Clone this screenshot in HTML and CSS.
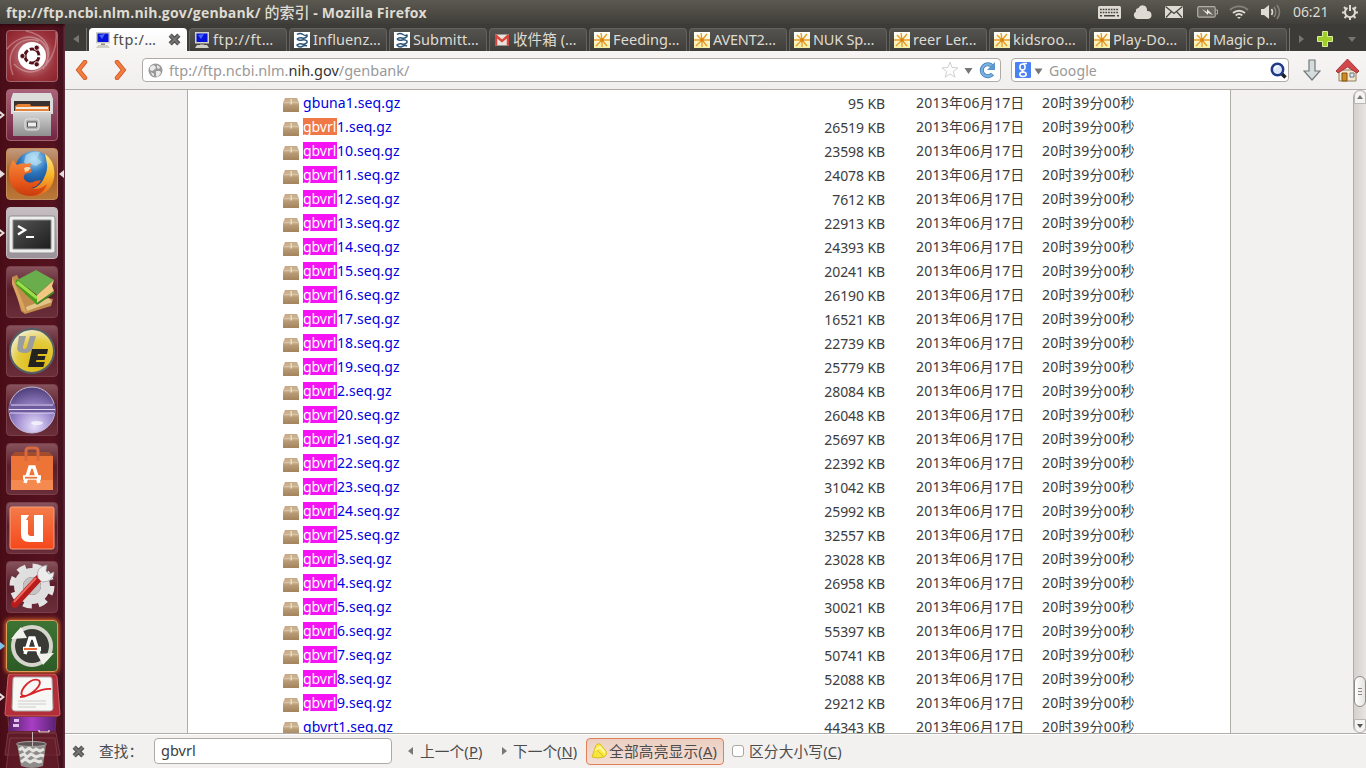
FILE: index.html
```
<!DOCTYPE html>
<html lang="zh-CN">
<head>
<meta charset="utf-8">
<title>ftp://ftp.ncbi.nlm.nih.gov/genbank/ 的索引</title>
<link rel="stylesheet" href="styles.css">
</head>
<body>
<svg class="defs" width="0" height="0" aria-hidden="true">
<defs>
<linearGradient id="boxg" x1="0" y1="0" x2="0" y2="1"><stop offset="0" stop-color="#c6a886"/><stop offset=".35" stop-color="#d0b896"/><stop offset=".5" stop-color="#b89d76"/><stop offset="1" stop-color="#a3835b"/></linearGradient>
<linearGradient id="starbg" x1="0" y1="0" x2="0" y2="1"><stop offset="0" stop-color="#fff"/><stop offset="1" stop-color="#f3eea0"/></linearGradient>
<linearGradient id="grey" x1="0" y1="0" x2="0" y2="1"><stop offset="0" stop-color="#d8d8d8"/><stop offset="1" stop-color="#8f8f8f"/></linearGradient>
<linearGradient id="orange" x1="0" y1="0" x2="0" y2="1"><stop offset="0" stop-color="#f47b4a"/><stop offset="1" stop-color="#f5481c"/></linearGradient>
<radialGradient id="globe" cx=".5" cy=".2" r=".8"><stop offset="0" stop-color="#b4e2f7"/><stop offset=".45" stop-color="#2c77bd"/><stop offset="1" stop-color="#123a7c"/></radialGradient>
<linearGradient id="fox" x1="0" y1="0" x2="0" y2="1"><stop offset="0" stop-color="#f5893a"/><stop offset=".6" stop-color="#e8581a"/><stop offset="1" stop-color="#c93c0c"/></linearGradient>
<linearGradient id="tail" x1="0" y1="0" x2="0" y2="1"><stop offset="0" stop-color="#ffe98a"/><stop offset=".5" stop-color="#f8b52b"/><stop offset="1" stop-color="#e8641b"/></linearGradient>
<linearGradient id="term" x1="0" y1="0" x2="1" y2="1"><stop offset="0" stop-color="#555"/><stop offset="1" stop-color="#1d1d1d"/></linearGradient>
<radialGradient id="ue" cx=".65" cy=".75" r=".8"><stop offset="0" stop-color="#dcb60a"/><stop offset=".6" stop-color="#e4cb3e"/><stop offset="1" stop-color="#f2f0dc"/></radialGradient>
<radialGradient id="ecl" cx=".55" cy=".85" r=".85"><stop offset="0" stop-color="#e6defb"/><stop offset=".5" stop-color="#9a86cb"/><stop offset="1" stop-color="#4d3d78"/></radialGradient>
<linearGradient id="purple" x1="0" y1="0" x2="1" y2="0"><stop offset="0" stop-color="#56206b"/><stop offset=".5" stop-color="#a83fc4"/><stop offset="1" stop-color="#5a2273"/></linearGradient>
<symbol id="box" viewBox="0 0 16 14"><path d="M2 0h12l1.500 3.500.5 1V14H0V4.500L.5 3.500z" fill="url(#boxg)"/><path d="M.5 4.500h15" stroke="#d9c5a7" stroke-width=".8"/><path d="M7.500 1v5.500h1.400V1z" fill="#ecdfc9"/></symbol>
<symbol id="monitor" viewBox="0 0 16 16"><path d="M1 0h14v11.500H1z" fill="#cfcfc6"/><path d="M2.500 1.500h11v8.500h-11z" fill="#0612d8"/><path d="M4 3l6-1-3 5z" fill="#4b66ff"/><path d="M6 11.500h4V13H6z" fill="#8b8b83"/><path d="M3 13h10l2 3H1z" fill="#cfcfc6"/></symbol>
<symbol id="ncbi" viewBox="0 0 16 16"><path d="M0 0h16v16H0z" fill="#fff"/><path d="M3 2.500q3-2 6 0t4 0v2q-2 2.500-5 1.500T3 7M3 7q2 2 5 1t5 1v1.500q-2 2.500-5 1.500t-5 1q2 3 5 1.500t5-.5" fill="none" stroke="#2b5579" stroke-width="1.500"/></symbol>
<symbol id="gmail" viewBox="0 0 14 11"><path d="M0 0h14v11H0z" fill="#e7e2da"/><path d="M0 11V0h1.500L7 5l5.500-5H14v11h-2.200V4L7 8 2.200 4v7z" fill="#d8433a"/></symbol>
<symbol id="spark" viewBox="0 0 16 16"><path d="M0 0h16v16H0z" fill="url(#starbg)"/><path d="M8 8L7 1M8 8l5-6M8 8h8M8 8l5 6M8 8v7M8 8l-6 6M8 8H0M8 8L3 3" stroke="#e79a28" stroke-width="1.350"/><circle cx="8" cy="8" r="1.700" fill="#d98212"/></symbol>
<symbol id="cross" viewBox="0 0 12 12"><path d="M2 2l8 8M10 2l-8 8" stroke="#555" stroke-width="4.200"/><path d="M2 2l8 8M10 2l-8 8" stroke="#777" stroke-width="1.500"/></symbol>
</defs>
</svg>
<div class="desktop">
<header class="panel">
  <div class="title">ftp://ftp.ncbi.nlm.nih.gov/genbank/ <span class="cjk">的索引</span> - Mozilla Firefox</div>
  <div class="indicators">
    <svg class="i-kbd" width="23" height="13" viewBox="0 0 23 13"><rect width="23" height="13" rx="1.500" fill="#dfdbd2"/><path d="M2 3.500h19M2 6.500h19" stroke="#45443f" stroke-width="1.600" stroke-dasharray="1.700 1"/><path d="M2 9.800h2M6 9.800h11M19 9.800h2" stroke="#45443f" stroke-width="1.600"/></svg>
    <svg class="i-cloud" width="19" height="14" viewBox="0 0 19 14"><path d="M4 14a4 4 0 0 1-1-7.500A3 3 0 0 1 5.500 3 4.500 4.500 0 0 1 14 4v2a4 4 0 0 1 1 8z" fill="#dfdbd2"/></svg>
    <svg class="i-mail" width="18" height="12" viewBox="0 0 18 12"><path d="M0 0h18v12H0z" fill="#dfdbd2"/><path d="M.5.5L9 7.500 17.500.5M1 11.500l5.500-6M17 11.500l-5.500-6" fill="none" stroke="#484740" stroke-width="1.300"/></svg>
    <svg class="i-bat" width="21" height="12" viewBox="0 0 21 12"><rect x=".7" y=".7" width="17.500" height="10.500" rx="1.500" fill="#67655f" stroke="#b2aea5" stroke-width="1.200"/><path d="M19 4h1.500v4H19" fill="none" stroke="#b2aea5"/><path d="M5 3l5 3V3l6 6-5-2v2z" fill="#efebe2"/></svg>
    <svg class="i-wifi" width="20" height="14" viewBox="0 0 20 14"><g fill="none" stroke-width="1.900"><path d="M1 5a13 13 0 0 1 18 0" stroke="#85827b"/><path d="M4 8a9 9 0 0 1 12 0" stroke="#dfdbd2"/><path d="M6.700 10.500a5 5 0 0 1 6.600 0" stroke="#dfdbd2"/></g><path d="M8 12h4l-2 2z" fill="#dfdbd2"/></svg>
    <svg class="i-vol" width="20" height="16" viewBox="0 0 20 16"><path d="M0 5h3l5-4v14l-5-4H0z" fill="#dfdbd2"/><path d="M10.500 5q2 3 0 6" fill="none" stroke="#dfdbd2" stroke-width="1.600"/><path d="M13 3q3.500 5 0 10M16 1q5 7 0 14" fill="none" stroke="#858179" stroke-width="1.600"/></svg>
    <span class="clock">06:21</span>
    <svg class="i-gear" width="16" height="16" viewBox="0 0 16 16"><path d="M5.500 3.800a5 5 0 1 0 5 0" fill="none" stroke="#dfdbd2" stroke-width="2"/><path d="M8 1v6M0 8.500h3M13 8.500h3M8 13v3M2 3l2 2M14 3l-2 2M2.500 14l2-2M13.500 14l-2-2" stroke="#dfdbd2" stroke-width="2"/></svg>
  </div>
</header>
<nav class="launcher">
  <div class="tile t-dash"><svg viewBox="0 0 52 52"><g fill="none" stroke="#fff" stroke-width="1.500" opacity=".3"><path d="M1 19C20-4 50 9 40 36M50 2C53 31 28 55 8 34M7 45C-2 21 13 5 33 11M20 1c21 4 29 19 17 38"/></g><circle cx="26" cy="26" r="14" fill="#fff"/><circle cx="26" cy="26" r="7" fill="none" stroke="#561018" stroke-width="3" stroke-dasharray="12.500 2.160" transform="rotate(10 26 26)"/><g fill="#561018" stroke="#fff" stroke-width=".8"><circle cx="16.500" cy="26" r="2.600"/><circle cx="30.700" cy="17.700" r="2.600"/><circle cx="30.700" cy="34.300" r="2.600"/></g></svg></div>
  <div class="tile t-files"><span class="pip left open"></span><svg viewBox="0 0 52 52"><path d="M7 4h38l2 6v15H5V10z" fill="#dcdcda"/><path d="M8 12h36v11H8z" fill="#39322e"/><path d="M9 17l3-2h12l1 2h18v6H9z" fill="#e58134"/><path d="M10 18h32v2H10z" fill="#f3ece3"/><path d="M7 22h38v25H7z" fill="url(#grey)"/><path d="M7 22.500h38" stroke="#f0f0f0"/><rect x="19" y="30" width="14" height="11" rx="2.500" fill="#b4b4b4" stroke="#e8e8e8"/><path d="M21.500 33h9v5h-9z" fill="#eee" stroke="#555"/></svg></div>
  <div class="tile t-fox"><span class="pip left"></span><span class="pip right"></span><svg viewBox="0 0 52 52"><circle cx="28" cy="22" r="19" fill="url(#globe)"/><path d="M20 7q7-5 14-3l-3 6 5 4-6 4-5-2-4 3-3-5z" fill="#b9e2f5" opacity=".65"/><path d="M39 6q9 6 9.500 19Q48 46 27 48q-10 0-15-6 20 2 26-12 4-8 3-14-1-6-2-10z" fill="url(#tail)"/><path d="M7 12l4 5q5-3 9-1l5-1-1 5 2 4-7 2q-3 4 1 7 4 3 9 0l6-1q-3 7-10 8 8 3 16-4-4 12-17 12Q5 47 3 27q0-9 4-15z" fill="url(#fox)"/><path d="M18 20q4-2 7 0-2 3-6 4z" fill="#fbd8a8"/></svg></div>
  <div class="tile t-term"><span class="pip left open"></span><svg viewBox="0 0 52 52"><rect x="3" y="9" width="46" height="37" rx="2" fill="#eceeec" stroke="#8e8e8e"/><path d="M7 13h38v29H7z" fill="url(#term)" stroke="#888"/><path d="M12 19l7 4-7 4.500" fill="none" stroke="#fff" stroke-width="2.300"/><path d="M20 30h8" stroke="#fff" stroke-width="2"/></svg></div>
  <div class="tile t-dark"><svg viewBox="0 0 52 52"><path d="M6 11l5-2 9 20 27 4-2 7-26 8-4-3z" fill="#c28d4c"/><path d="M20 41l23-9 3 4-25 9z" fill="#e5c48a"/><path d="M6 11v7l10 26 4 3-2-8z" fill="#d8a45f"/><path d="M30 4l18 10-17 15-20-15z" fill="#69ad4c"/><path d="M11 13q-3 4 0 7l20 19v-9z" fill="#4c9d1d"/><path d="M11 16l20 16" stroke="#9be04a" stroke-width="3"/><path d="M31 29l17-15-2 6 2 5-17 14z" fill="#f2c781"/><path d="M31 38l17-12" stroke="#3e8924" stroke-width="2"/></svg></div>
  <div class="tile t-dark"><svg viewBox="0 0 52 52"><circle cx="26" cy="26" r="22" fill="url(#ue)" stroke="#536069" stroke-width="2"/><path d="M13 11h7l-3 11q-.5 2 1.500 2t2.500-2l3-11h6l-3.500 12q-1.500 5-8 5-9 0-7-7z" fill="#9a9c9d"/><path d="M26 24h16l-1 5H32l-.5 2h8l-1 4h-8l-.7 2h9l-1.500 5H22z" fill="#25231f"/></svg></div>
  <div class="tile t-dark"><svg viewBox="0 0 52 52"><circle cx="26" cy="26" r="23" fill="url(#ecl)" stroke="#c4bbdc"/><path d="M3 20h46v9H3z" fill="#6e5b9d"/><path d="M5 21h42M3 25.500h46M4 29h44" stroke="#e2daf5" stroke-width="1.200"/><ellipse cx="31" cy="39" rx="6" ry="2" fill="#fff" opacity=".65"/></svg></div>
  <div class="tile t-dark"><svg viewBox="0 0 52 52"><path d="M5 13h42v34H5z" fill="#eb7436"/><path d="M5 13l4-4h34l4 4z" fill="#a34c2c"/><path d="M5 37h42v10H5z" fill="#f58a50"/><path d="M20 18V8q0-3 3-3h6q3 0 3 3v10" fill="none" stroke="#d9683d" stroke-width="3"/><path d="M19 40l5-16h4l5 16" fill="none" stroke="#fff" stroke-width="3.500"/><path d="M17 34.500h18" stroke="#fff" stroke-width="4.500"/><path d="M19 34.700h12" stroke="#eb7436" stroke-width="1.800"/></svg></div>
  <div class="tile t-dark"><svg viewBox="0 0 52 52"><rect x="4" y="5" width="44" height="42" rx="2" fill="url(#orange)" stroke="#f7a17d"/><path d="M15 13h8l-3 5h2v13q0 3 3 3h3V13h9v27H23q-8 0-8-8z" fill="#fff"/></svg></div>
  <div class="tile t-dark"><svg viewBox="0 0 52 52"><circle cx="26" cy="25" r="19.500" fill="none" stroke="#e3e3e3" stroke-width="6" stroke-dasharray="8.500 6.815"/><circle cx="26" cy="25" r="13.500" fill="none" stroke="#dfdfdf" stroke-width="9"/><circle cx="26" cy="25" r="9" fill="#c3c3c3"/><path d="M34 17l4-4" stroke="#e6e6e6" stroke-width="7"/><path d="M9 43l23-25" stroke="#b81d1b" stroke-width="7.500" stroke-linecap="round"/><path d="M8 41l22-24" stroke="#ee6a60" stroke-width="2"/><path d="M32 17q-3-11 9-13l-1 6 3 3 5-2q0 10-12 10z" fill="#ececec" stroke="#999" stroke-width=".7"/></svg></div>
  <div class="tile t-update"><span class="pip left blue"></span><svg viewBox="0 0 52 52"><circle cx="26" cy="26" r="17" fill="#393a36"/><circle cx="26" cy="26" r="19" fill="none" stroke="#d5d5ce" stroke-width="4"/><path d="M5 19L15 7l6 11zM48 33L37 45l-6-11z" fill="#f1f1ec"/><path d="M19 34l5-16h4l5 16" fill="none" stroke="#fff" stroke-width="3.500"/><path d="M17 29h18" stroke="#fff" stroke-width="4.500"/><path d="M18 29h13" stroke="#ee6c33" stroke-width="2"/></svg></div>
  <div class="folded"><span class="pip left open"></span><svg width="65" height="96" viewBox="0 0 65 96"><path d="M7 28h50l-2 30H9z" fill="#4e101b" stroke="#87414d" opacity=".8"/><path d="M10 43h45l1 14H8z" fill="url(#purple)"/><path d="M14 45h5v3h-5zM13 50h6v3h-6z" fill="#e3c2ee"/><path d="M39 56v2h10v-2" fill="none" stroke="#fff"/><path d="M8 59h48l4 22H5z" fill="#64202c" stroke="#894551" opacity=".75"/><path d="M10 64h45l4 32H6z" fill="#65202c" stroke="#8d4852" opacity=".65"/><path d="M17 70h29l-3 22q-11 4-22 0z" fill="#8f8d8b"/><path d="M19 76l3-2 3 3 4-3 4 3 3-2 4 2 4-2M20 82l4-2 3 3 4-3 5 3 5-2 3 1M21 88l4-3 5 3 4-2 5 2 3-1" fill="none" stroke="#e4e4e0" stroke-width="3"/><ellipse cx="31.500" cy="70" rx="15" ry="2.500" fill="#5c5455" stroke="#a9a4a4"/><path d="M32.500 58v14" stroke="#c7b9bb"/><path d="M11 0h42q3 0 4 3l3 37q0 2-3 2H8q-3 0-3-2L8 3q0-3 3-3z" fill="#b22e38" stroke="#d16268"/><path d="M15 3h35q2 0 2 2l1 29q0 3-3 3H15q-3 0-3-3L13 5q0-2 2-2z" fill="#f7f7f5" stroke="#aaa"/><path d="M20 23C31 23 45 9 38 6 28 3 16 22 24 22c8 0 14-8 27-7" fill="none" stroke="#d9242a" stroke-width="1.800"/><path d="M18 27h28M18 30h28M18 33h18" stroke="#ccc"/></svg></div>
</nav>
<main class="browser">
  <div class="tabs">
    <div class="scroll-l"><svg width="6" height="8"><path d="M6 0v8L0 4z" fill="#77756f"/></svg></div>
    <div class="tab active"><svg class="fav"><use href="#monitor"/></svg><span>ftp:/…</span><svg class="close" width="13" height="13"><use href="#cross"/></svg></div>
    <div class="tab"><svg class="fav"><use href="#monitor"/></svg><span class="w">ftp://ft…</span></div>
    <div class="tab"><svg class="fav"><use href="#ncbi"/></svg><span>Influenz…</span></div>
    <div class="tab"><svg class="fav"><use href="#ncbi"/></svg><span>Submitt…</span></div>
    <div class="tab"><svg class="fav gm"><use href="#gmail"/></svg><span>收件箱 (…</span></div>
    <div class="tab"><svg class="fav"><use href="#spark"/></svg><span>Feeding…</span></div>
    <div class="tab"><svg class="fav"><use href="#spark"/></svg><span class="n">AVENT2…</span></div>
    <div class="tab"><svg class="fav"><use href="#spark"/></svg><span class="n">NUK Sp…</span></div>
    <div class="tab"><svg class="fav"><use href="#spark"/></svg><span>reer Ler…</span></div>
    <div class="tab"><svg class="fav"><use href="#spark"/></svg><span>kidsroo…</span></div>
    <div class="tab"><svg class="fav"><use href="#spark"/></svg><span>Play-Do…</span></div>
    <div class="tab"><svg class="fav"><use href="#spark"/></svg><span class="n">Magic p…</span></div>
    <div class="tab-end"><svg width="77" height="23" viewBox="0 0 77 23"><path d="M9 7v8l5-4z" fill="#77756f"/><path d="M32.500 3.500h5v5h5v5h-5v5h-5v-5h-5v-5h5z" fill="#9fce2b" stroke="#d9ee9c"/><path d="M58 9h8l-4 5z" fill="#77756f"/></svg></div>
  </div>
  <div class="toolbar">
    <svg class="back" width="13" height="20" viewBox="0 0 13 20"><path d="M10 2L3.500 10l6.500 8" fill="none" stroke="#c9501e" stroke-width="4.400" stroke-linecap="round"/><path d="M10 2L3.500 10l6.500 8" fill="none" stroke="#f27c3e" stroke-width="3" stroke-linecap="round"/></svg>
    <svg class="fwd" width="13" height="20" viewBox="0 0 13 20"><path d="M3 2l6.500 8L3 18" fill="none" stroke="#c9501e" stroke-width="4.400" stroke-linecap="round"/><path d="M3 2l6.500 8L3 18" fill="none" stroke="#f27c3e" stroke-width="3" stroke-linecap="round"/></svg>
    <div class="url"><svg width="15" height="15" viewBox="0 0 15 15"><circle cx="7.500" cy="7.500" r="7" fill="#9a9a9a"/><path d="M2 4l3-2 2 1 1 2-2 2-2 1-2-1zM9 2l3 2-1 2-2-1zM8 8l4 0 1 2-3 4-2-1zM3 9l3 2v2l-2-1z" fill="#eaeaea"/></svg><span class="addr">ftp://ftp.ncbi.nlm.<b>nih.gov</b>/genbank/</span>
      <svg class="url-icons" width="54" height="18" viewBox="0 0 54 18"><path d="M8 1l2 5.500 6 .3-4.700 3.700 1.700 5.700L8 13l-5 3.200 1.700-5.700L0 6.800l6-.3z" fill="#fff" stroke="#d0d0d0"/><path d="M22.500 7h8l-4 6z" fill="#777"/><path d="M50.500 13a6 6 0 1 1-.5-8" fill="none" stroke="#3e7cb5" stroke-width="4"/><path d="M50.500 13a6 6 0 1 1-.5-8" fill="none" stroke="#79b0de" stroke-width="2.400"/><path d="M53 1v8h-8z" fill="#5b98cf"/></svg></div>
    <div class="search"><svg width="28" height="16" viewBox="0 0 28 16"><rect width="16" height="16" rx="1" fill="#4a82f4"/><g fill="none" stroke="#fff" stroke-width="1.600"><ellipse cx="7.500" cy="5" rx="2.600" ry="3"/><path d="M12 1.500H8M8 8c-2 1 0 2 1 2"/><ellipse cx="8" cy="12.300" rx="3.200" ry="2.200"/></g><path d="M19.500 6.500h8l-4 6z" fill="#777"/></svg><span>Google</span><svg class="mag" width="17" height="17" viewBox="0 0 17 17"><path d="M11 11l4.500 4.500" stroke="#222" stroke-width="3.500"/><circle cx="7.500" cy="7.500" r="5.700" fill="#dce8fa" stroke="#203a88" stroke-width="2.500"/><path d="M4.500 7q1-3 4-3" fill="none" stroke="#fff" stroke-width="1.500"/></svg></div>
    <svg class="down" width="18" height="23" viewBox="0 0 18 23"><path d="M6 1h6v11h5l-8 9-8-9h5z" fill="#d6dcdd" stroke="#71787a" stroke-width="1.200"/></svg>
    <svg class="home" width="23" height="23" viewBox="0 0 23 23"><path d="M3 11h17v11H3z" fill="#f2e7cf" stroke="#927e61"/><path d="M6 14h5v8H6z" fill="#d18a1f" stroke="#835215"/><path d="M14 14h4v4h-4z" fill="#d8eafa" stroke="#777"/><path d="M11.500 0L0 12l2 2 9.500-6 9.500 6 2-2z" fill="#d2474b" stroke="#982329" stroke-width=".8"/></svg>
  </div>
  <div class="content">
    <section class="listing">
      <div class="row"><svg><use href="#box"/></svg><a>gbuna1.seq.gz</a><span class="size">95 KB</span><span class="date">2013年06月17日</span><span class="time">20时39分00秒</span></div>
      <div class="row"><svg><use href="#box"/></svg><a><mark class="cur">gbvrl</mark>1.seq.gz</a><span class="size">26519 KB</span><span class="date">2013年06月17日</span><span class="time">20时39分00秒</span></div>
      <div class="row"><svg><use href="#box"/></svg><a><mark>gbvrl</mark>10.seq.gz</a><span class="size">23598 KB</span><span class="date">2013年06月17日</span><span class="time">20时39分00秒</span></div>
      <div class="row"><svg><use href="#box"/></svg><a><mark>gbvrl</mark>11.seq.gz</a><span class="size">24078 KB</span><span class="date">2013年06月17日</span><span class="time">20时39分00秒</span></div>
      <div class="row"><svg><use href="#box"/></svg><a><mark>gbvrl</mark>12.seq.gz</a><span class="size">7612 KB</span><span class="date">2013年06月17日</span><span class="time">20时39分00秒</span></div>
      <div class="row"><svg><use href="#box"/></svg><a><mark>gbvrl</mark>13.seq.gz</a><span class="size">22913 KB</span><span class="date">2013年06月17日</span><span class="time">20时39分00秒</span></div>
      <div class="row"><svg><use href="#box"/></svg><a><mark>gbvrl</mark>14.seq.gz</a><span class="size">24393 KB</span><span class="date">2013年06月17日</span><span class="time">20时39分00秒</span></div>
      <div class="row"><svg><use href="#box"/></svg><a><mark>gbvrl</mark>15.seq.gz</a><span class="size">20241 KB</span><span class="date">2013年06月17日</span><span class="time">20时39分00秒</span></div>
      <div class="row"><svg><use href="#box"/></svg><a><mark>gbvrl</mark>16.seq.gz</a><span class="size">26190 KB</span><span class="date">2013年06月17日</span><span class="time">20时39分00秒</span></div>
      <div class="row"><svg><use href="#box"/></svg><a><mark>gbvrl</mark>17.seq.gz</a><span class="size">16521 KB</span><span class="date">2013年06月17日</span><span class="time">20时39分00秒</span></div>
      <div class="row"><svg><use href="#box"/></svg><a><mark>gbvrl</mark>18.seq.gz</a><span class="size">22739 KB</span><span class="date">2013年06月17日</span><span class="time">20时39分00秒</span></div>
      <div class="row"><svg><use href="#box"/></svg><a><mark>gbvrl</mark>19.seq.gz</a><span class="size">25779 KB</span><span class="date">2013年06月17日</span><span class="time">20时39分00秒</span></div>
      <div class="row"><svg><use href="#box"/></svg><a><mark>gbvrl</mark>2.seq.gz</a><span class="size">28084 KB</span><span class="date">2013年06月17日</span><span class="time">20时39分00秒</span></div>
      <div class="row"><svg><use href="#box"/></svg><a><mark>gbvrl</mark>20.seq.gz</a><span class="size">26048 KB</span><span class="date">2013年06月17日</span><span class="time">20时39分00秒</span></div>
      <div class="row"><svg><use href="#box"/></svg><a><mark>gbvrl</mark>21.seq.gz</a><span class="size">25697 KB</span><span class="date">2013年06月17日</span><span class="time">20时39分00秒</span></div>
      <div class="row"><svg><use href="#box"/></svg><a><mark>gbvrl</mark>22.seq.gz</a><span class="size">22392 KB</span><span class="date">2013年06月17日</span><span class="time">20时39分00秒</span></div>
      <div class="row"><svg><use href="#box"/></svg><a><mark>gbvrl</mark>23.seq.gz</a><span class="size">31042 KB</span><span class="date">2013年06月17日</span><span class="time">20时39分00秒</span></div>
      <div class="row"><svg><use href="#box"/></svg><a><mark>gbvrl</mark>24.seq.gz</a><span class="size">25992 KB</span><span class="date">2013年06月17日</span><span class="time">20时39分00秒</span></div>
      <div class="row"><svg><use href="#box"/></svg><a><mark>gbvrl</mark>25.seq.gz</a><span class="size">32557 KB</span><span class="date">2013年06月17日</span><span class="time">20时39分00秒</span></div>
      <div class="row"><svg><use href="#box"/></svg><a><mark>gbvrl</mark>3.seq.gz</a><span class="size">23028 KB</span><span class="date">2013年06月17日</span><span class="time">20时39分00秒</span></div>
      <div class="row"><svg><use href="#box"/></svg><a><mark>gbvrl</mark>4.seq.gz</a><span class="size">26958 KB</span><span class="date">2013年06月17日</span><span class="time">20时39分00秒</span></div>
      <div class="row"><svg><use href="#box"/></svg><a><mark>gbvrl</mark>5.seq.gz</a><span class="size">30021 KB</span><span class="date">2013年06月17日</span><span class="time">20时39分00秒</span></div>
      <div class="row"><svg><use href="#box"/></svg><a><mark>gbvrl</mark>6.seq.gz</a><span class="size">55397 KB</span><span class="date">2013年06月17日</span><span class="time">20时39分00秒</span></div>
      <div class="row"><svg><use href="#box"/></svg><a><mark>gbvrl</mark>7.seq.gz</a><span class="size">50741 KB</span><span class="date">2013年06月17日</span><span class="time">20时39分00秒</span></div>
      <div class="row"><svg><use href="#box"/></svg><a><mark>gbvrl</mark>8.seq.gz</a><span class="size">52088 KB</span><span class="date">2013年06月17日</span><span class="time">20时39分00秒</span></div>
      <div class="row"><svg><use href="#box"/></svg><a><mark>gbvrl</mark>9.seq.gz</a><span class="size">29212 KB</span><span class="date">2013年06月17日</span><span class="time">20时39分00秒</span></div>
      <div class="row"><svg><use href="#box"/></svg><a>gbvrt1.seq.gz</a><span class="size">44343 KB</span><span class="date">2013年06月17日</span><span class="time">20时39分00秒</span></div>
    </section>
    <div class="scrollbar"><div class="arrow"><svg width="6" height="4"><path d="M0 4h6L3 0z" fill="#777"/></svg></div><div class="trough"><div class="thumb"><i></i><i></i><i></i></div></div><div class="arrow dn"><svg width="6" height="4"><path d="M0 0h6L3 4z" fill="#555"/></svg></div></div>
  </div>
  <div class="findbar">
    <svg class="fx" width="13" height="13"><use href="#cross"/></svg>
    <span class="lbl">查找：</span>
    <div class="input">gbvrl</div>
    <svg class="pa" width="5" height="8"><path d="M5 0v8L0 4z" fill="#777"/></svg><span class="prev">上一个(<u>P</u>)</span>
    <svg class="na" width="5" height="8"><path d="M0 0v8l5-4z" fill="#777"/></svg><span class="next">下一个(<u>N</u>)</span>
    <div class="hl"><svg width="17" height="16" viewBox="0 0 17 16"><path d="M1 14l3-9 9 9q-6 2-12 0z" fill="#f5e63b" stroke="#d8be24"/><path d="M4 5q1-5 5-4l6 7q2 4-2 6z" fill="#fbe93f" stroke="#d8be24"/><path d="M4 7l5-3 5 6" fill="none" stroke="#fff8a0" stroke-width="2"/></svg><span>全部高亮显示(<u>A</u>)</span></div>
    <i class="check"></i><span class="case">区分大小写(<u>C</u>)</span>
  </div>
</main>
</div>
</body>
</html>
```
FILE: styles.css
```
* { box-sizing: border-box; }
body { margin: 0; overflow: hidden; font: 14px/20px "Noto Sans", "Noto Sans CJK SC", sans-serif; color: #3c3c3c; }
svg { display: block; flex: none; }
span { white-space: nowrap; }
.defs { position: absolute; }
.desktop { width: 1366px; height: 768px; display: grid; grid-template: 24px 744px / 65px 1301px; background: #f2f1f0; }

.panel { grid-column: 1 / 3; display: flex; justify-content: space-between; align-items: center; padding: 0 8px 0 6px; background: linear-gradient(#5b594f, #3f3e3a); color: #dfdbd2; }
.title { font-family: "Open Sans", "Noto Sans CJK SC", sans-serif; font-weight: 700; font-size: 14px; white-space: nowrap; letter-spacing: .18px; }
.title .cjk { font-weight: 500; font-size: 15px; letter-spacing: 0; }
.indicators { display: flex; align-items: center; }
.i-kbd { margin-right: 12px; }
.i-cloud { margin-right: 13px; }
.i-mail { margin-right: 14px; }
.i-bat { margin-right: 11px; }
.i-wifi { margin-right: 12px; }
.i-vol { margin-right: 12px; }
.clock { width: 36px; margin-right: 13px; letter-spacing: -.1px; }

.launcher { background: linear-gradient(90deg, #4a0d17, #55131f 80%, #43101d 96%, #6b3544); display: flex; flex-direction: column; gap: 7px; padding: 6px 0 0 6px; overflow: hidden; box-shadow: inset 0 4px 4px -3px #22060a; }
.tile { width: 52px; height: 52px; flex: none; position: relative; border-radius: 4px; border: 1px solid #a3656c; background: linear-gradient(#8b5560, #64202f 50%, #722f3d); }
.tile svg { width: 52px; height: 52px; margin: -1px; }
.t-dash { background: radial-gradient(#d5a5a8, #9c343d 65%, #8a222b); }
.t-files { background: linear-gradient(#a8627a, #732543); }
.t-fox { background: linear-gradient(#c29a7d, #a65f24 50%, #bb7939); border-color: #c68e5c; }
.t-term { background: linear-gradient(#c6bec2, #9a9298); border-color: #c5bcc0; }
.t-dark { border-color: #79404c; background: linear-gradient(#86525c, #5a1e2b 45%, #6a2e3b); }
.t-update { background: linear-gradient(#3d7434, #2d5a26); border-color: #e39b58; box-shadow: 0 0 4px 1px #dc6d2d; }
.pip { position: absolute; left: -7px; top: 21px; width: 0; height: 0; border: solid transparent; border-width: 4px 0 4px 5px; border-left-color: #e6dede; }
.pip.right { left: auto; right: -7px; border-width: 4px 5px 4px 0; border-right-color: #e6dede; }
.pip.blue { border-left-color: #7cc4ec; }
.pip.open::after { content: ""; position: absolute; left: -6px; top: -2px; border: solid transparent; border-width: 2px 0 2px 3px; border-left-color: #53131f; }
.folded { position: relative; margin: -5px 0 0 -6px; }
.folded .pip { left: 0; top: 19px; }

.browser { display: grid; grid-template-rows: 27px 39px 643px 35px; min-width: 0; }
.tabs { background: #3c3b37; display: flex; align-items: flex-end; gap: 2px; }
.scroll-l { width: 22px; height: 23px; padding: 7px 0 0 8px; border-right: 1px solid #77756f; }
.tab { width: 98px; flex: none; height: 23px; display: flex; align-items: center; padding: 0 0 0 5px; border-radius: 4px 4px 0 0; border: 1px solid #64625e; border-bottom: 0; background: linear-gradient(#54534f, #3f3e3b); color: #dfdbd2; overflow: hidden; font-size: 14.500px; }
.tab span { letter-spacing: .1px; margin-top: -2px; }
.tab .n { letter-spacing: -.2px; }
.tab .w { letter-spacing: .6px; }
.tab.active { background: linear-gradient(#fff, #f5f4f3); color: #4c4c4c; border-color: #fff; padding-right: 5px; }
.tab.active span { letter-spacing: .6px; }
.fav { width: 16px; height: 16px; margin: -1px 2px 0 0; }
.tab:not(.active) { padding-left: 4px; }
.tab:not(.active) .fav { margin-right: 3px; }
.tab .fav.gm { width: 14px; height: 12px; margin-right: 4px !important; margin-left: 1px; }
.close { margin: -2px 0 0 auto; }
.tab-end { border-left: 1px solid #77756f; height: 23px; }

.toolbar { display: flex; align-items: center; background: linear-gradient(#f6f5f4, #f0efee); border-bottom: 1px solid #b0aca8; padding-left: 10px; }
.back { margin-right: 26px; }
.fwd { margin-right: 15px; }
.url { width: 859px; height: 24px; border: 1px solid #aeaba6; border-radius: 4px; background: #fff; display: flex; align-items: center; padding: 0 4px 0 5px; color: #999; margin-right: 10px; }
.addr { margin-left: 6px; font-size: 14.500px; letter-spacing: 0; }
.addr b { font-weight: 400; color: #333; }
.url-icons { margin-left: auto; }
.search { width: 278px; height: 24px; border: 1px solid #aeaba6; border-radius: 4px; background: #fff; display: flex; align-items: center; padding: 0 1px 0 3px; color: #999; }
.search span { margin-left: 6px; padding-top: 1px; letter-spacing: .1px; }
.mag { margin-left: auto; }
.down { margin-left: 14px; }
.home { margin-left: 15px; }

.content { display: flex; justify-content: space-between; background: #f2f1f0; overflow: hidden; padding-left: 122px; }
.listing { width: 1044px; background: #fff; border: solid #b0aca8; border-width: 0 1px; padding-left: 95px; overflow: hidden; }
.row { height: 24px; display: grid; grid-template-columns: 20px 400px 182px 157px 120px; align-items: center; line-height: 24px; }
.row svg { width: 16px; height: 14px; margin-top: 4px; }
.row a { color: #0000e0; white-space: nowrap; letter-spacing: .08px; }
.row mark { display: inline-block; width: 34px; height: 17px; line-height: 17px; background: #f512f5; color: #fff; letter-spacing: -.05px; }
.row mark.cur { background: #f07746; }
.row .size { text-align: right; padding-top: 2px; letter-spacing: -.1px; }
.row .date { padding-left: 31px; letter-spacing: .23px; }
.row .time { letter-spacing: .3px; }

.scrollbar { width: 14px; border: 1px solid #b0aca8; border-width: 0 1px; display: flex; flex-direction: column; background: #e2dfdc; border-radius: 7px; }
.arrow { height: 14px; border-radius: 7px 7px 0 0; background: #f5f4f3; display: grid; place-items: center; border: 1px solid #bbb7b3; }
.arrow.dn { border-radius: 0 0 7px 7px; }
.trough { flex: 1; padding-top: 572px; background: linear-gradient(90deg, #d3d0cd, #e7e4e2); }
.thumb { height: 31px; border: 1px solid #8f8c88; border-radius: 6px; background: linear-gradient(90deg, #fff, #e5e3e1); display: flex; flex-direction: column; align-items: center; justify-content: center; gap: 2px; }
.thumb i { width: 4px; height: 1px; background: #8c8985; }

.findbar { border-top: 1px solid #b0aca8; box-shadow: inset 0 1px #fff; display: flex; align-items: center; padding-left: 7px; color: #4c4c4c; font-size: 14.700px; }
.lbl { margin-left: 14px; width: 55px; }
.input { width: 238px; height: 26px; border: 1px solid #aeaba6; border-radius: 4px; background: #fff; padding: 1px 6px; color: #3c3c3c; font-size: 14.500px; }
.pa { margin-left: 16px; }
.prev { margin-left: 7px; width: 66px; letter-spacing: .1px; }
.na { margin-left: 16px; }
.next { margin-left: 6px; width: 66px; }
.hl { margin-left: 7px; width: 138px; height: 27px; border: 1px solid #e08057; border-radius: 4px; background: linear-gradient(#eccfc3, #f4ddd3); display: flex; align-items: center; padding-left: 4px; }
.hl span { margin-left: 1px; letter-spacing: .2px; }
.check { margin-left: 8px; width: 12px; height: 12px; border: 1px solid #aaa6a2; border-radius: 3px; background: #fff; }
.case { margin-left: 5px; letter-spacing: .15px; }
```
